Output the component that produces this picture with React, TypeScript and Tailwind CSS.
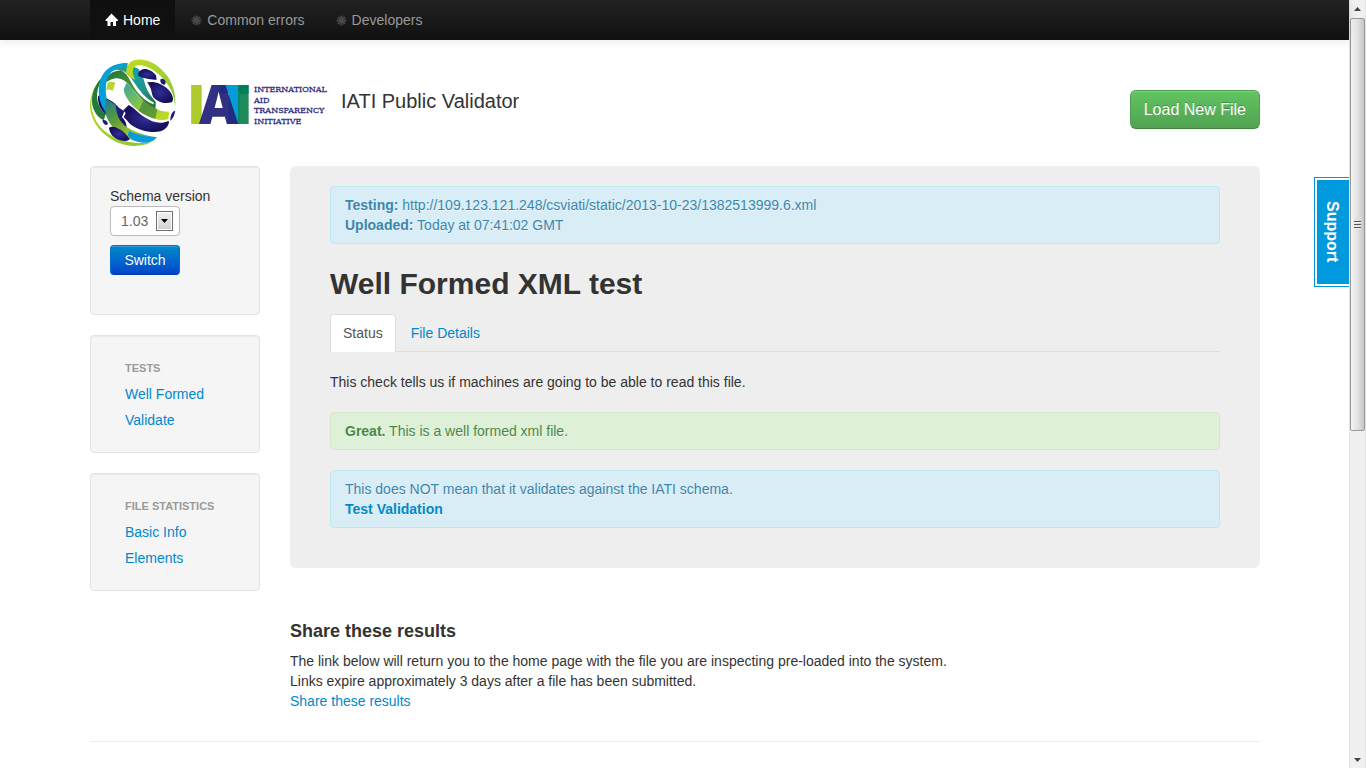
import type { ReactNode } from "react";

function GlobeLogo() {
  return (
    <svg viewBox="30 30 258 258" className="h-[86px] w-[86px] shrink-0 overflow-visible" role="img" aria-label="Globe of woven ribbons">
      <defs>
        <linearGradient id="lime" x1="0" y1="0" x2="1" y2="1">
          <stop offset="0" stopColor="#c4dc1c" />
          <stop offset="1" stopColor="#86c63c" />
        </linearGradient>
        <linearGradient id="teal" x1="0" y1="0" x2="1" y2="1">
          <stop offset="0" stopColor="#2f9c78" />
          <stop offset="0.35" stopColor="#12a0a8" />
          <stop offset="0.7" stopColor="#27928a" />
          <stop offset="1" stopColor="#1f6e4c" />
        </linearGradient>
        <linearGradient id="sweep" x1="0" y1="0" x2="0.8" y2="1">
          <stop offset="0" stopColor="#1b7f93" />
          <stop offset="0.4" stopColor="#5f9d35" />
          <stop offset="0.75" stopColor="#a3c83a" />
          <stop offset="1" stopColor="#0f9fc0" />
        </linearGradient>
        <linearGradient id="band" x1="0" y1="0" x2="1" y2="1">
          <stop offset="0" stopColor="#24733d" />
          <stop offset="0.5" stopColor="#4d9a3c" />
          <stop offset="1" stopColor="#24733d" />
        </linearGradient>
        <linearGradient id="limeTail" x1="0" y1="0" x2="1" y2="1">
          <stop offset="0" stopColor="#35a5a0" />
          <stop offset="0.5" stopColor="#8fc641" />
          <stop offset="1" stopColor="#c6df1e" />
        </linearGradient>
        <radialGradient id="navy">
          <stop offset="0" stopColor="#2f2f94" />
          <stop offset="1" stopColor="#170f5e" />
        </radialGradient>
      </defs>
      <path d="M66 84C38 110 26 150 31 180C40 236 91 276 140 286C170 291 200 284 216 276C184 281 150 280 117 268C68 250 38 212 34 166C34 135 46 108 66 84Z" fill="url(#lime)" />
      <path d="M70 78C44 102 32 136 37 165C42 188 57 207 72 210L76 194C61 178 50 158 51 132C53 112 62 94 70 78Z" fill="#237a3a" />
      <path d="M54 137C68 138 88 147 104 160L118 174L133 184L126 202C137 212 142 226 139 239C117 226 100 216 89 202C66 190 52 165 54 137Z" fill="url(#navy)" />
      <path d="M78 84C99 56 130 57 154 76C180 97 190 128 226 154C230 170 226 181 214 184C190 150 168 132 148 106C128 82 105 77 79 97Z" fill="url(#band)" />
      <path d="M83 98C91 94 99 94 106 99L98 123C89 117 81 117 78 122Z" fill="#b9d532" />
      <path d="M57 110C62 66 91 38 143 39L142 55C120 56 102 58 91 69C79 83 75 109 79 140C83 166 93 180 105 194L91 200C64 176 53 144 57 110Z" fill="#079fd8" />
      <path d="M105 57C128 46 158 46 175 56C196 80 190 112 217 143L228 158C201 150 179 126 164 101C149 80 132 64 105 57Z" fill="url(#teal)" />
      <path d="M125 60C150 72 160 96 178 119C192 138 208 151 222 158L219 163C199 154 183 140 169 122C153 100 147 77 125 60Z" fill="#fff" />
      <path d="M139 72C137 47 148 32 170 29C203 25 238 45 262 78C282 106 289 142 285 171C284 145 276 116 253 91C233 65 198 43 174 46C158 48 153 64 166 90C149 82 143 77 139 72Z" fill="url(#lime)" />
      <path d="M181 62C191 51 215 58 228 76L230 89C214 91 190 84 176 79C173 71 175 67 181 62Z" fill="url(#navy)" />
      <path d="M241 89C244 83 255 87 257 95C257 102 255 105 251 104C244 102 240 96 241 89Z" fill="#211b76" />
      <path d="M201 97L219 96C239 98 256 109 268 122C280 136 282 151 275 157C253 164 229 154 219 140C213 127 217 117 201 97Z" fill="url(#navy)" />
      <path d="M77 148C84 150 98 158 107 166C109 199 122 224 154 239C180 250 205 260 229 261C218 278 197 280 174 275C124 266 77 222 75 178Z" fill="url(#sweep)" />
      <path d="M147 243C176 256 206 263 231 261C219 278 197 281 174 275C160 270 150 264 143 257Z" fill="#0a9cda" />
      <path d="M140 98C156 113 172 139 194 155C216 170 235 185 267 185L265 208C238 215 205 202 180 185C153 167 134 141 131 118Z" fill="url(#limeTail)" />
      <path d="M190 152C205 160 219 170 232 177L226 206C208 202 192 194 176 182Z" fill="#1f6e3c" opacity="0.55" />
      <path d="M146 165C160 171 174 189 193 201C217 217 242 224 266 212C270 224 257 238 242 244C211 250 176 241 153 224C143 216 137 205 131 201L137 190L130 181Z" fill="url(#navy)" />
      <path d="M271 207C272 194 278 182 286 182C284 195 278 206 271 212Z" fill="#211b76" />
      <path d="M67 211C75 207 83 214 84 222C77 229 69 222 67 211Z" fill="#211b76" />
      <path d="M87 233C98 226 111 234 122 239C132 245 141 256 149 267C146 274 132 274 118 270C103 265 88 252 87 233Z" fill="url(#navy)" />
    </svg>
  );
}

function Wordmark() {
  return (
    <svg viewBox="0 0 138 44" className="h-11 w-[138px] shrink-0 overflow-visible" role="img" aria-label="IATI International Aid Transparency Initiative">
      <g fontFamily="Open Sans" fontWeight="800" fontSize="54">
        <text x="-3" y="41" fill="#afca2b">I</text>
        <text x="28" y="41" fill="#059cda">T</text>
        <text x="9" y="41" fill="#25247b" opacity="0.94">A</text>
        <text x="44" y="41" fill="#007a43" opacity="0.88">I</text>
      </g>
      <g fontFamily="DejaVu Serif" fontSize="8" fill="#2b2a80" stroke="#2b2a80" strokeWidth="0.3">
        <text x="64" y="9">INTERNATIONAL</text>
        <text x="64" y="20">AID</text>
        <text x="64" y="30">TRANSPARENCY</text>
        <text x="64" y="41">INITIATIVE</text>
      </g>
    </svg>
  );
}

function HomeIcon() {
  return (
    <svg viewBox="0 0 14 14" className="mr-1 h-[14px] w-[14px]" aria-hidden="true">
      <path d="M6.500 .5L13 7v1h-2v5H8V9H5.500v4H2.500V8H.5V7Z" fill="#fff" />
    </svg>
  );
}

function AsteriskIcon() {
  return (
    <svg viewBox="0 0 14 14" className="mr-[3px] h-[14px] w-[14px]" aria-hidden="true">
      <g stroke="#4a4a4a" strokeWidth="1.500">
        <path d="M6.500 2.500v10M1.500 7.500h10M3 4l7 7M10 4l-7 7" />
        <path d="M4.600 2.900l3.800 9.200M8.400 2.900l-3.800 9.200M1.900 5.600l9.200 3.800M1.900 9.400l9.200-3.800" strokeWidth="0.7" />
      </g>
    </svg>
  );
}

const link = "text-[#0088cc] hover:underline";

function Well({ children, className = "" }: { children: ReactNode; className?: string }) {
  return (
    <div className={`rounded border border-[#e3e3e3] bg-[#f5f5f5] shadow-[inset_0_1px_1px_rgba(0,0,0,0.05)] ${className}`}>
      {children}
    </div>
  );
}

function NavList({ title, items }: { title: string; items: string[] }) {
  return (
    <Well className="px-[34px] pt-[22px] pb-[19px]">
      <h2 className="mb-[3px] text-[11px] leading-5 font-bold text-[#999] uppercase [text-shadow:0_1px_0_rgba(255,255,255,0.5)]">{title}</h2>
      <ul>
        {items.map((item) => (
          <li key={item} className="py-[3px]">
            <a href="#" className={link}>{item}</a>
          </li>
        ))}
      </ul>
    </Well>
  );
}

function Alert({ tone, children }: { tone: "info" | "success"; children: ReactNode }) {
  const colours =
    tone === "info" ? "border-[#bce8f1] bg-[#d9edf7] text-[#3a87ad]" : "border-[#d6e9c6] bg-[#dff0d8] text-[#468847]";
  return (
    <div className={`mb-5 rounded border px-[14px] py-2 [text-shadow:0_1px_0_rgba(255,255,255,0.5)] ${colours}`}>{children}</div>
  );
}

function Navbar() {
  return (
    <header className="h-10 border-b border-[#111] bg-linear-to-b from-[#222] to-[#111] shadow-[0_1px_10px_rgba(0,0,0,0.1)]">
      <nav className="mx-auto flex h-full max-w-[1171px] pl-px text-[#999]">
        <a href="#" className="flex items-center bg-[#111] px-[15px] text-white shadow-[inset_0_3px_8px_rgba(0,0,0,0.125)]">
          <HomeIcon />
          Home
        </a>
        <a href="#" className="flex items-center px-[15px]">
          <AsteriskIcon />
          Common errors
        </a>
        <a href="#" className="flex items-center px-[15px]">
          <AsteriskIcon />
          Developers
        </a>
      </nav>
    </header>
  );
}

function Sidebar() {
  return (
    <aside className="flex w-[170px] shrink-0 flex-col gap-5">
      <Well className="px-[19px] pt-[19px] pb-[39px]">
        <label htmlFor="schema" className="block">Schema version</label>
        <div className="relative w-[70px]">
          <select
            id="schema"
            className="block h-[30px] w-full appearance-none rounded border border-[#bbb] bg-white pl-[10px] text-[#666]"
            defaultValue="1.03"
          >
            <option>1.03</option>
            <option>1.02</option>
            <option>1.01</option>
          </select>
          <span className="pointer-events-none absolute top-[5px] right-[7px] flex h-5 w-[17px] items-center justify-center border border-[#707070] bg-linear-to-b from-[#f2f2f2] to-[#cfcfcf] shadow-[inset_0_0_0_1px_#fff]">
            <svg viewBox="0 0 7 4" className="h-1 w-[7px]" aria-hidden="true">
              <path d="M0 0h7L3.500 4Z" fill="#000" />
            </svg>
          </span>
        </div>
        <button className="mt-[9px] block h-[30px] w-[70px] rounded border border-[#0070c8] border-b-[#003fae] bg-linear-to-b from-[#0088cc] to-[#0044cc] text-white shadow-[inset_0_1px_0_rgba(255,255,255,0.2)] [text-shadow:0_-1px_0_rgba(0,0,0,0.25)]">
          Switch
        </button>
      </Well>
      <NavList title="Tests" items={["Well Formed", "Validate"]} />
      <NavList title="File statistics" items={["Basic Info", "Elements"]} />
    </aside>
  );
}

function Results() {
  return (
    <main className="min-w-0 flex-1">
      <section className="rounded-md bg-[#eee] px-10 pt-5 pb-5">
        <Alert tone="info">
          <p><strong>Testing:</strong> http://109.123.121.248/csviati/static/2013-10-23/1382513999.6.xml</p>
          <p><strong>Uploaded:</strong> Today at 07:41:02 GMT</p>
        </Alert>
        <h1 className="text-[30px] leading-10 font-bold">Well Formed XML test</h1>
        <div className="mt-[10px] mb-5 flex border-b border-[#ddd]">
          <a href="#" className="-mb-px rounded-t border border-[#ddd] border-b-white bg-white px-3 py-2 text-[#555]">Status</a>
          <a href="#" className={`ml-[2px] px-[13px] pt-[9px] pb-2 ${link}`}>File Details</a>
        </div>
        <p className="mb-5">This check tells us if machines are going to be able to read this file.</p>
        <Alert tone="success"><strong>Great.</strong> This is a well formed xml file.</Alert>
        <Alert tone="info">
          <p>This does NOT mean that it validates against the IATI schema.</p>
          <a href="#" className={`font-bold ${link}`}>Test Validation</a>
        </Alert>
      </section>
      <section className="mt-[53px]">
        <h2 className="mb-[10px] text-lg leading-5 font-bold">Share these results</h2>
        <p>The link below will return you to the home page with the file you are inspecting pre-loaded into the system.</p>
        <p>Links expire approximately 3 days after a file has been submitted.</p>
        <a href="#" className={link}>Share these results</a>
      </section>
    </main>
  );
}

function Scrollbar() {
  return (
    <div className="flex w-[17px] shrink-0 flex-col items-center border-x border-[#e4e4e4] bg-[#f0f0f0]" aria-hidden="true">
      <div className="flex h-[18px] items-center">
        <svg viewBox="0 0 7 4" className="h-1 w-[7px]"><path d="M0 4h7L3.500 0Z" fill="#444" /></svg>
      </div>
      <div className="flex h-[413px] w-[15px] items-center justify-center rounded-[2px] border border-[#979797] bg-linear-to-r from-[#f5f5f5] via-[#e2e2e4] to-[#c6c6cb]">
        <svg viewBox="0 0 7 8" className="h-2 w-[7px]">
          <path d="M0 .5h7M0 3.500h7M0 6.500h7" stroke="#555" />
          <path d="M0 1.500h7M0 4.500h7M0 7.500h7" stroke="#eee" />
        </svg>
      </div>
      <div className="mt-auto flex h-[17px] items-center">
        <svg viewBox="0 0 7 4" className="h-1 w-[7px]"><path d="M0 0h7L3.500 4Z" fill="#444" /></svg>
      </div>
    </div>
  );
}

export default function App() {
  return (
    <div className="flex min-h-screen bg-white font-['Liberation_Sans',Arial,sans-serif] text-[14px] leading-5 text-[#333]">
      <div className="relative min-w-0 flex-1">
        <Navbar />
        <div className="mx-auto max-w-[1171px] pl-px">
          <div className="flex h-[126px] items-start pt-5">
            <GlobeLogo />
            <div className="ml-[14px] pt-[23px]"><Wordmark /></div>
            <h1 className="ml-[13px] pt-[31px] text-xl leading-5">IATI Public Validator</h1>
            <button className="mt-[30px] ml-auto h-[39px] rounded-md border border-[#4fa04f] border-b-[#3d853d] bg-linear-to-b from-[#62c462] to-[#51a351] px-[13px] text-[16px] text-white shadow-[inset_0_1px_0_rgba(255,255,255,0.2),0_1px_2px_rgba(0,0,0,0.05)] [text-shadow:0_-1px_0_rgba(0,0,0,0.25)]">
              Load New File
            </button>
          </div>
          <div className="flex items-start gap-[30px]">
            <Sidebar />
            <Results />
          </div>
          <hr className="mt-[30px] border-[#eee]" />
        </div>
        <button className="absolute top-[177px] right-0 h-[110px] w-[35px] border border-r-0 border-[#0099dd] bg-white py-[2px] pl-[2px]">
          <span className="flex h-full w-full items-center justify-center bg-[#0099dd] pr-[2px] text-[16px] font-bold text-white [writing-mode:vertical-rl]">
            Support
          </span>
        </button>
      </div>
      <Scrollbar />
    </div>
  );
}
